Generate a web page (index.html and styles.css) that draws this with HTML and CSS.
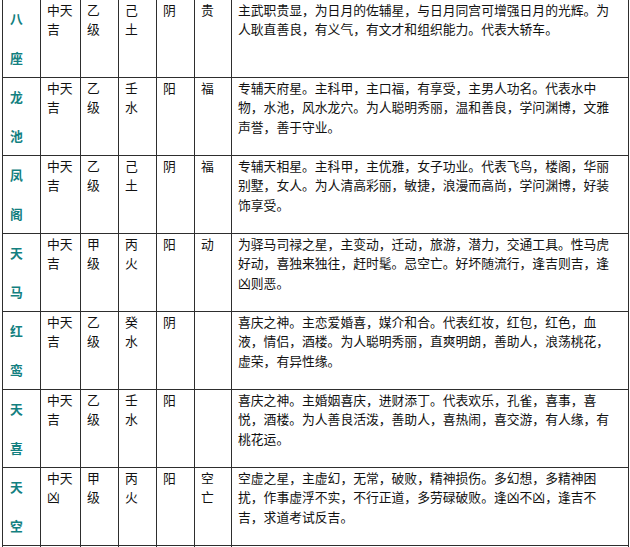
FILE: index.html
```html
<!DOCTYPE html>
<html lang="zh-CN">
<head>
<meta charset="utf-8">
<link rel="stylesheet" href="styles.css">
<title>星曜表</title>
</head>
<body>
<div class="wrap">
<table class="stars">
<colgroup>
<col class="c-name"><col class="c-type"><col class="c-grade"><col class="c-elem"><col class="c-yy"><col class="c-hua"><col class="c-desc">
</colgroup>
<tbody>
<tr>
<td class="name">八<br><br>座</td>
<td>中天<br>吉</td><td>乙<br>级</td><td>己<br>土</td><td>阴</td><td>贵</td>
<td class="desc">主武职贵显，为日月的佐辅星，与日月同宫可增强日月的光辉。为<br>人耿直善良，有义气，有文才和组织能力。代表大轿车。</td>
</tr>
<tr>
<td class="name">龙<br><br>池</td>
<td>中天<br>吉</td><td>乙<br>级</td><td>壬<br>水</td><td>阳</td><td>福</td>
<td class="desc">专辅天府星。主科甲，主口福，有享受，主男人功名。代表水中<br>物，水池，风水龙穴。为人聪明秀丽，温和善良，学问渊博，文雅<br>声誉，善于守业。</td>
</tr>
<tr>
<td class="name">凤<br><br>阁</td>
<td>中天<br>吉</td><td>乙<br>级</td><td>己<br>土</td><td>阴</td><td>福</td>
<td class="desc">专辅天相星。主科甲，主优雅，女子功业。代表飞鸟，楼阁，华丽<br>别墅，女人。为人清高彩丽，敏捷，浪漫而高尚，学问渊博，好装<br>饰享受。</td>
</tr>
<tr>
<td class="name">天<br><br>马</td>
<td>中天<br>吉</td><td>甲<br>级</td><td>丙<br>火</td><td>阳</td><td>动</td>
<td class="desc">为驿马司禄之星，主变动，迁动，旅游，潜力，交通工具。性马虎<br>好动，喜独来独往，赶时髦。忌空亡。好坏随流行，逢吉则吉，逢<br>凶则恶。</td>
</tr>
<tr>
<td class="name">红<br><br>鸾</td>
<td>中天<br>吉</td><td>乙<br>级</td><td>癸<br>水</td><td>阴</td><td></td>
<td class="desc">喜庆之神。主恋爱婚喜，媒介和合。代表红妆，红包，红色，血<br>液，情侣，酒楼。为人聪明秀丽，直爽明朗，善助人，浪荡桃花，<br>虚荣，有异性缘。</td>
</tr>
<tr>
<td class="name">天<br><br>喜</td>
<td>中天<br>吉</td><td>乙<br>级</td><td>壬<br>水</td><td>阳</td><td></td>
<td class="desc">喜庆之神。主婚姻喜庆，进财添丁。代表欢乐，孔雀，喜事，喜<br>悦，酒楼。为人善良活泼，善助人，喜热闹，喜交游，有人缘，有<br>桃花运。</td>
</tr>
<tr>
<td class="name">天<br><br>空</td>
<td>中天<br>凶</td><td>甲<br>级</td><td>丙<br>火</td><td>阳</td><td>空<br>亡</td>
<td class="desc">空虚之星，主虚幻，无常，破败，精神损伤。多幻想，多精神困<br>扰，作事虚浮不实，不行正道，多劳碌破败。逢凶不凶，逢吉不<br>吉，求道考试反吉。</td>
</tr>
<tr>
<td class="name"></td><td></td><td></td><td></td><td></td><td></td><td class="desc"></td>
</tr>
</tbody>
</table>
</div>
</body>
</html>
```
FILE: styles.css
```css
html, body {
  margin: 0;
  padding: 0;
  background: #ffffff;
}

.wrap {
  width: 630px;
  height: 547px;
  overflow: hidden;
  padding-left: 2px;
  box-sizing: border-box;
}

.stars {
  margin-top: -1px;
  border-collapse: collapse;
  table-layout: fixed;
  width: 626px;
  font-family: "Noto Sans CJK SC", "Noto Sans", sans-serif;
  font-size: 12.8px;
  line-height: 19.3px;
  color: #111111;
}

.c-name { width: 38px; }
.c-type { width: 40px; }
.c-grade { width: 38px; }
.c-elem { width: 38px; }
.c-yy { width: 38px; }
.c-hua { width: 37px; }
.c-desc { width: 397px; }

.stars td {
  border: 1px solid #2e2e2e;
  height: 77px;
  padding: 0 0 0 6px;
  vertical-align: top;
  white-space: nowrap;
  overflow: hidden;
}

.stars td.name {
  vertical-align: middle;
  color: #138080;
  font-weight: bold;
  line-height: 19.6px;
  padding-left: 7px;
}

.stars td.desc {
  padding-left: 6px;
}
```
